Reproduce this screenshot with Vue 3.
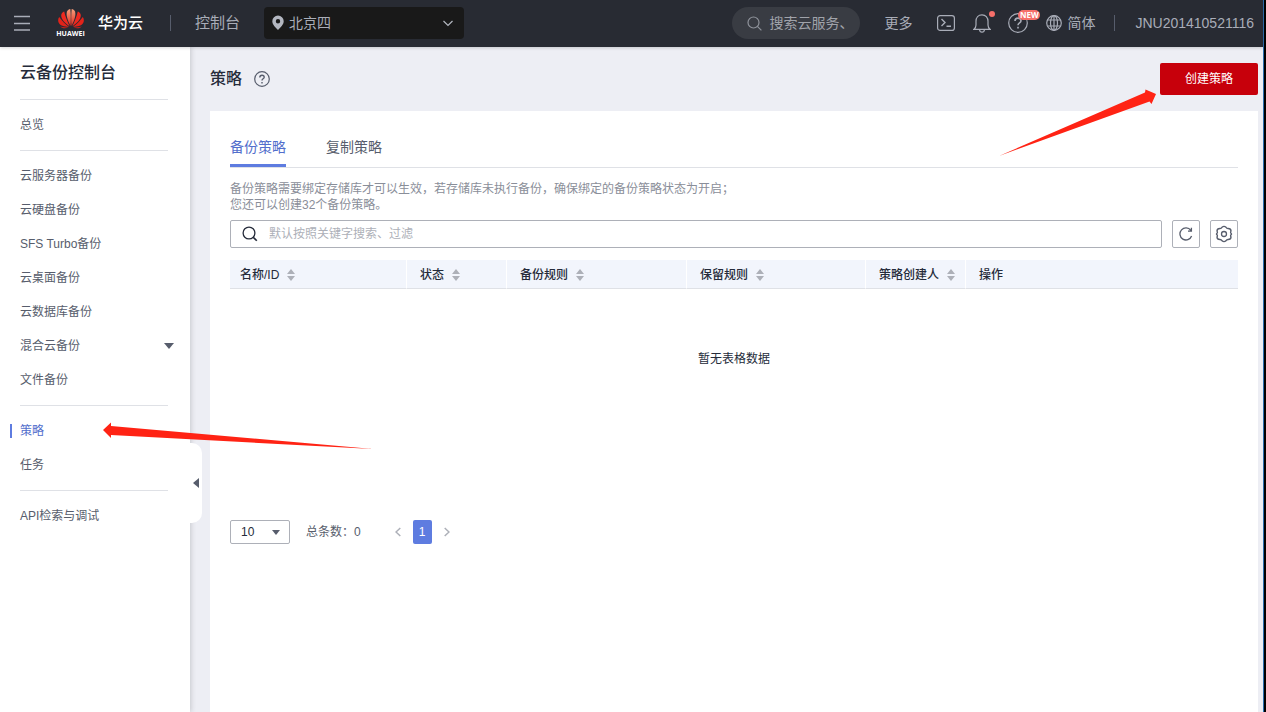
<script setup>
import { ref } from 'vue'

const groups = [
  [{ label: '总览' }],
  [
    { label: '云服务器备份' },
    { label: '云硬盘备份' },
    { label: 'SFS Turbo备份' },
    { label: '云桌面备份' },
    { label: '云数据库备份' },
    { label: '混合云备份', expandable: true },
    { label: '文件备份' }
  ],
  [{ label: '策略', active: true }, { label: '任务' }],
  [{ label: 'API检索与调试' }]
]

const columns = [
  { label: '名称/ID', key: 'name', sortable: true },
  { label: '状态', key: 'status', sortable: true },
  { label: '备份规则', key: 'rule', sortable: true },
  { label: '保留规则', key: 'keep', sortable: true },
  { label: '策略创建人', key: 'owner', sortable: true },
  { label: '操作', key: 'action', sortable: false }
]

const tabs = ['备份策略', '复制策略']
const activeTab = ref(0)
</script>

<template>
  <div class="frame">
    <header class="topbar">
      <button class="icon-btn menu" aria-label="菜单">
        <svg width="16" height="16" viewBox="0 0 16 16"><path d="M0 1.500h16M0 8.500h16M0 15h16" stroke="#a9adb8" stroke-width="1.500" fill="none" /></svg>
      </button>
      <a class="brand" href="#">
        <span class="logo">
          <svg width="26" height="20" viewBox="0 0 26 20" aria-hidden="true">
            <defs>
              <linearGradient id="petal" x1="0" y1="0" x2="0" y2="1">
                <stop offset="0" stop-color="#f8a07c" />
                <stop offset="1" stop-color="#e0281e" />
              </linearGradient>
            </defs>
            <path d="M12.500 17C9.500 11 7.800 6 9 2.500C9.700.8 11 .1 12.300 0C12.900 5 12.900 12 12.500 17z" fill="url(#petal)" />
            <path d="M13.500 17C16.500 11 18.200 6 17 2.500C16.300.8 15 .1 13.700 0C13.100 5 13.100 12 13.500 17z" fill="url(#petal)" />
            <path d="M11.600 17.300C7 14 3.300 10.500 3.200 6.500C3.200 4.500 4.600 3 6.200 2.500C7.300 7.500 9.500 12.500 11.600 17.300z" fill="#ee2a20" />
            <path d="M14.400 17.300C19 14 22.700 10.500 22.800 6.500C22.800 4.500 21.400 3 19.800 2.500C18.700 7.500 16.500 12.500 14.400 17.300z" fill="#ee2a20" />
            <path d="M10.900 17.800C6 17.800 1.800 16.500.6 13.500C-.2 11.400 .1 9.500 1.200 8C4 12 7.400 15.200 10.900 17.800z" fill="#e2231a" />
            <path d="M15.100 17.800C20 17.800 24.200 16.500 25.400 13.500C26.200 11.400 25.900 9.500 24.800 8C22 12 18.600 15.200 15.100 17.800z" fill="#e2231a" />
            <path d="M10.500 18.600C7.500 19.800 4.200 19.700 2.200 17.600C5 18.400 7.600 18.600 10.500 18.600zM15.500 18.600C18.500 19.800 21.800 19.700 23.800 17.600C21 18.400 18.400 18.600 15.500 18.600z" fill="#d91f18" />
          </svg>
          <span class="logo-name">HUAWEI</span>
        </span>
        <span class="brand-name">华为云</span>
      </a>
      <i class="sep"></i>
      <a class="console" href="#">控制台</a>
      <div class="region">
        <svg class="pin" width="12" height="15" viewBox="0 0 12 15"><path fill-rule="evenodd" d="M6 .5a5.700 5.700 0 0 1 5.700 5.700C11.700 9.500 8.500 12.500 6 15C3.500 12.500.3 9.500.3 6.200A5.700 5.700 0 0 1 6 .5zM6 4a2.200 2.200 0 1 0 0 4.400A2.200 2.200 0 0 0 6 4z" fill="#b3b7c0" /></svg>
        <select aria-label="区域">
          <option>北京四</option>
        </select>
        <svg class="chev" width="12" height="7" viewBox="0 0 12 7"><path d="M1.500 1L6 5.500 10.500 1" stroke="#b3b7c0" stroke-width="1.200" fill="none" /></svg>
      </div>

      <div class="right">
        <label class="cloud-search">
          <svg width="15" height="15" viewBox="0 0 15 15"><circle cx="6.500" cy="6.500" r="5.500" stroke="#8f939b" stroke-width="1.200" fill="none" /><path d="M10.400 10.400l4 4" stroke="#8f939b" stroke-width="1.200" /></svg>
          <input type="text" placeholder="搜索云服务、" aria-label="搜索云服务" />
        </label>
        <a class="more" href="#">更多</a>
        <button class="icon-btn term" aria-label="命令行">
          <svg width="18" height="16" viewBox="0 0 18 16"><rect x=".6" y=".6" width="16.800" height="14.800" rx="2.500" stroke="#a9adb8" stroke-width="1.200" fill="none" /><path d="M4.500 4l3.500 3.500L4.500 11M9.500 11.200h4.500" stroke="#a9adb8" stroke-width="1.400" fill="none" /></svg>
        </button>
        <button class="icon-btn bell" aria-label="消息">
          <svg width="18" height="19" viewBox="0 0 18 19"><path d="M1 15.300h16c-1.500-1.300-2-2.500-2-4.300V7.300C15 3.500 12.600.8 9 .8S3 3.500 3 7.300V11c0 1.800-.5 3-2 4.300zM6.500 15.500c.2 1.700 1.200 2.700 2.500 2.700s2.300-1 2.500-2.700" stroke="#a9adb8" stroke-width="1.200" fill="none" /></svg>
          <i class="dot"></i>
        </button>
        <button class="icon-btn help" aria-label="帮助">
          <svg width="20" height="20" viewBox="0 0 20 20"><circle cx="10" cy="10" r="9.300" stroke="#a9adb8" stroke-width="1.200" fill="none" /><path d="M7 8c0-1.800 1.300-2.900 3-2.900s3 1.100 3 2.700c0 2.100-3 2.100-3 4.400M10 13.700v1.700" stroke="#a9adb8" stroke-width="1.600" fill="none" /></svg>
          <span class="new">NEW</span>
        </button>
        <button class="lang">
          <svg width="16" height="16" viewBox="0 0 16 16"><g stroke="#a9adb8" stroke-width="1.200" fill="none"><circle cx="8" cy="8" r="7.300" /><ellipse cx="8" cy="8" rx="3.500" ry="7.300" /><path d="M8 .7v14.600M1.500 5h13M1.500 11h13" /></g></svg>
          简体
        </button>
        <i class="sep"></i>
        <a class="account" href="#">JNU201410521116</a>
      </div>
    </header>

    <div class="body">
      <aside class="side">
        <h2>云备份控制台</h2>
        <nav>
          <ul v-for="(group, i) in groups" :key="i">
            <li v-for="item in group" :key="item.label">
              <a href="#" :class="{ active: item.active }">
                {{ item.label }}
                <svg v-if="item.expandable" width="10" height="6" viewBox="0 0 10 6"><path d="M0 0h10L5 6z" fill="#575d6c" /></svg>
              </a>
            </li>
          </ul>
        </nav>
        <button class="collapse" aria-label="收起">
          <svg width="6" height="10" viewBox="0 0 6 10"><path d="M6 0v10L0 5z" fill="#575d6c" /></svg>
        </button>
      </aside>

      <main>
        <div class="title-row">
          <h1>策略</h1>
          <svg width="16" height="16" viewBox="0 0 16 16"><circle cx="8" cy="8" r="7.300" stroke="#575d6c" stroke-width="1.200" fill="none" /><path d="M5.800 6.400c0-1.400 1-2.200 2.200-2.200s2.200.8 2.200 2c0 1.600-2.200 1.600-2.200 3.300M8 11v1.400" stroke="#575d6c" stroke-width="1.400" fill="none" /></svg>
          <button class="create">创建策略</button>
        </div>

        <section class="card">
          <div class="tabs" role="tablist">
            <button v-for="(tab, i) in tabs" :key="tab" role="tab" :aria-selected="activeTab === i" :class="{ on: activeTab === i }" @click="activeTab = i">{{ tab }}</button>
          </div>
          <p class="desc">备份策略需要绑定存储库才可以生效，若存储库未执行备份，确保绑定的备份策略状态为开启；<br />您还可以创建32个备份策略。</p>
          <div class="tools">
            <label class="filter">
              <svg width="16" height="16" viewBox="0 0 16 16"><circle cx="7" cy="7" r="5.900" stroke="#252b3a" stroke-width="1.300" fill="none" /><path d="M11.200 11.200l3.600 3.600" stroke="#252b3a" stroke-width="1.600" /></svg>
              <input type="text" placeholder="默认按照关键字搜索、过滤" aria-label="搜索" />
            </label>
            <button class="square" aria-label="刷新">
              <svg width="14" height="14" viewBox="0 0 14 14"><path d="M12.600 9A6 6 0 1 1 11.800 3.400M12.400.8v3.400H9" stroke="#575d6c" stroke-width="1.300" fill="none" /></svg>
            </button>
            <button class="square" aria-label="设置">
              <svg width="18" height="18" viewBox="0 0 18 18"><path d="M7 2.200Q9 .6 11 2.200Q11.700 3.600 13.200 3.500Q15.900 3.500 16 6Q15.200 7.500 16 8.200Q17 9 16 9.800Q15.200 10.500 16 12Q15.900 14.500 13.200 14.500Q11.700 14.400 11 15.800Q9 17.400 7 15.800Q6.300 14.400 4.800 14.500Q2.100 14.500 2 12Q2.800 10.500 2 9.800Q1 9 2 8.200Q2.800 7.500 2 6Q2.100 3.500 4.800 3.500Q6.300 3.600 7 2.200z" stroke="#575d6c" stroke-width="1.400" fill="none" /><circle cx="9" cy="9" r="2.500" stroke="#575d6c" stroke-width="1.300" fill="none" /></svg>
            </button>
          </div>

          <table>
            <colgroup>
              <col v-for="c in columns" :key="c.key" :class="'c-' + c.key" />
            </colgroup>
            <thead>
              <tr>
                <th v-for="c in columns" :key="c.key" scope="col">
                  <span>
                    {{ c.label }}
                    <svg v-if="c.sortable" width="8" height="12" viewBox="0 0 8 12"><path d="M4 0l4 5H0zM4 12l4-5H0z" fill="#adb0b8" /></svg>
                  </span>
                </th>
              </tr>
            </thead>
            <tbody>
              <tr><td colspan="6">暂无表格数据</td></tr>
            </tbody>
          </table>

          <div class="pager">
            <div class="size">
              <select aria-label="每页条数"><option>10</option></select>
              <svg width="8" height="5" viewBox="0 0 8 5"><path d="M0 0h8L4 5z" fill="#575d6c" /></svg>
            </div>
            <span class="total">总条数：0</span>
            <button class="step" aria-label="上一页"><svg width="6" height="10" viewBox="0 0 6 10"><path d="M5.300 1L1 5l4.300 4" stroke="#adb0b8" stroke-width="1.500" fill="none" /></svg></button>
            <button class="page">1</button>
            <button class="step" aria-label="下一页"><svg width="6" height="10" viewBox="0 0 6 10"><path d="M.7 1L5 5 .7 9" stroke="#adb0b8" stroke-width="1.500" fill="none" /></svg></button>
          </div>
        </section>
      </main>
    </div>

    <svg class="mark to-create" width="158" height="68" viewBox="0 0 158 68" aria-hidden="true"><path d="M0 67L146 3.500L146.500.5L157 5L152.500 15L150.500 12.500z" fill="#ff2314" /></svg>
    <svg class="mark to-policy" width="270" height="28" viewBox="0 0 270 28" aria-hidden="true"><path d="M0 8l8-7.500V4L270 27 8 13v3z" fill="#ff2314" /></svg>
  </div>
</template>

<style>
html,
body {
  background: #000;
}
</style>

<style scoped>
.frame {
  position: relative;
  display: flex;
  flex-direction: column;
  min-height: 100vh;
  margin-right: 2px;
  border-right: 1px solid #2a6fae;
  box-sizing: border-box;
  background: #edeef4;
  color: #575d6c;
  font: 12px/16px "Liberation Sans", "Noto Sans CJK SC", sans-serif;
}
.frame *,
.frame *::before {
  box-sizing: border-box;
}
button,
input,
select {
  font: inherit;
  color: inherit;
  margin: 0;
  padding: 0;
  border: 0;
  background: none;
  outline: 0;
  appearance: none;
}
button {
  cursor: pointer;
}
a {
  color: inherit;
  text-decoration: none;
}
svg {
  display: block;
  flex: none;
}
h1,
h2,
p,
ul {
  margin: 0;
  padding: 0;
  list-style: none;
}

/* top bar */
.topbar {
  position: relative;
  z-index: 2;
  display: flex;
  align-items: center;
  height: 47px;
  padding: 0 9px 1px 14px;
  background: #282b33;
  box-shadow: 0 1px 3px rgba(40, 43, 51, 0.2);
  color: #a9adb8;
  font-size: 14px;
  line-height: 20px;
}
.icon-btn {
  position: relative;
}
.brand {
  display: flex;
  align-items: center;
  margin-left: 27px;
}
.logo {
  display: flex;
  flex-direction: column;
  align-items: center;
  gap: 1px;
  width: 27px;
  color: #fff;
}
.logo-name {
  font: bold 7px/7px "Open Sans", sans-serif;
}
.brand-name {
  margin-left: 14px;
  color: #fff;
  font-size: 15px;
  font-weight: 500;
}
.sep {
  width: 1px;
  height: 16px;
  background: #575d6c;
}
.brand + .sep {
  margin: 0 24px 0 27px;
}
.console {
  font-size: 15px;
}
.region {
  position: relative;
  width: 200px;
  height: 32px;
  margin-left: 24px;
}
.region select {
  width: 100%;
  height: 100%;
  padding: 0 32px 0 25px;
  border-radius: 4px;
  background: #191919;
}
.pin,
.chev {
  position: absolute;
  pointer-events: none;
}
.pin {
  left: 8px;
  top: 8px;
}
.chev {
  right: 10px;
  top: 13px;
}
.right {
  display: flex;
  align-items: center;
  margin-left: auto;
}
.cloud-search {
  display: flex;
  align-items: center;
  gap: 7px;
  width: 128px;
  height: 32px;
  padding: 0 15px;
  border-radius: 16px;
  background: #393c43;
}
.cloud-search input {
  width: 84px;
  flex: none;
}
.cloud-search input::placeholder {
  color: #a0a3aa;
  opacity: 1;
}
.more {
  margin-left: 24px;
}
.term {
  margin-left: 25px;
}
.bell {
  margin-left: 18px;
}
.help {
  margin-left: 17px;
}
.dot {
  position: absolute;
  right: -4px;
  top: -3px;
  width: 6px;
  height: 6px;
  border-radius: 50%;
  background: #f66f6a;
}
.new {
  position: absolute;
  left: 10px;
  top: -3px;
  width: 22px;
  height: 10px;
  border-radius: 5px;
  background: #f66f6a;
  color: #fff;
  font: bold 8px/10px "Open Sans", sans-serif;
  text-align: center;
}
.lang {
  display: flex;
  align-items: center;
  gap: 5px;
  margin-left: 18px;
}
.right .sep {
  margin: 0 20px 0 19px;
}

/* side navigation */
.body {
  display: flex;
  flex: 1;
}
.side {
  position: relative;
  flex: none;
  width: 190px;
  background: #fff;
  box-shadow: 1px 0 5px rgba(40, 43, 51, 0.2);
}
.side h2 {
  margin: 0 22px 0 20px;
  height: 53px;
  border-bottom: 1px solid #dfe1e6;
  color: #252b3a;
  font-size: 16px;
  font-weight: 500;
  line-height: 52px;
}
.side ul {
  padding: 8px 0;
}
.side ul + ul::before {
  content: "";
  display: block;
  height: 1px;
  margin: -1px 22px 8px 20px;
  background: #dfe1e6;
}
.side ul:not(:last-child) {
  padding-bottom: 9px;
}
.side ul + ul {
  padding-top: 0;
}
.side li a {
  position: relative;
  display: flex;
  align-items: center;
  justify-content: space-between;
  height: 34px;
  padding: 0 16px 0 20px;
}
.side li a.active {
  color: #526ecc;
}
.side li a.active::before {
  content: "";
  position: absolute;
  left: 10px;
  top: 10px;
  width: 2px;
  height: 14px;
  background: #5e7ce0;
}
.collapse {
  position: absolute;
  left: 190px;
  top: 396px;
  display: flex;
  align-items: center;
  width: 12px;
  height: 80px;
  padding-left: 3px;
  border-radius: 0 10px 10px 0;
  background: #fff;
}

/* content */
main {
  flex: 1;
  display: flex;
  flex-direction: column;
  min-width: 0;
  padding: 0 5px 0 20px;
}
.title-row {
  display: flex;
  align-items: center;
  gap: 12px;
  height: 64px;
}
.title-row h1 {
  color: #252b3a;
  font-size: 16px;
  line-height: 24px;
  font-weight: 500;
}
.create {
  width: 98px;
  height: 32px;
  margin-left: auto;
  border-radius: 2px;
  background: #c7000b;
  color: #fff;
}
.card {
  flex: 1;
  padding: 16px 20px;
  background: #fff;
}
.tabs {
  display: flex;
  gap: 40px;
  height: 41px;
  border-bottom: 1px solid #dfe1e6;
  font-size: 14px;
}
.tabs button {
  height: 40px;
  padding-top: 2px;
  border-bottom: 3px solid transparent;
}
.tabs .on {
  border-color: #5e7ce0;
  color: #526ecc;
}
.desc {
  padding: 13px 0 7px;
  color: #8a8e99;
}
.tools {
  display: flex;
  gap: 10px;
}
.filter {
  display: flex;
  align-items: center;
  flex: 1;
  gap: 11px;
  height: 28px;
  padding: 0 11px;
  border: 1px solid #adb0b8;
  border-radius: 2px;
}
.filter input {
  flex: 1;
}
.filter input::placeholder {
  color: #adb0b8;
  opacity: 1;
}
.square {
  display: flex;
  align-items: center;
  justify-content: center;
  width: 28px;
  height: 28px;
  border: 1px solid #adb0b8;
  border-radius: 2px;
}
table {
  width: 100%;
  margin-top: 12px;
  table-layout: fixed;
  border-collapse: separate;
  border-spacing: 0;
}
.c-name {
  width: 176px;
}
.c-status,
.c-owner {
  width: 100px;
}
.c-rule {
  width: 180px;
}
.c-keep {
  width: 179px;
}
th {
  height: 29px;
  padding: 1px 0 0 13px;
  border-bottom: 1px solid #dfe1e6;
  border-left: 1px solid #fff;
  background: #f2f5fc;
  color: #252b3a;
  font-weight: 500;
  text-align: left;
}
th:first-child {
  padding-left: 10px;
  border-left: 0;
}
th span {
  display: flex;
  align-items: center;
  gap: 8px;
}
td {
  height: 139px;
  padding: 0;
  color: #252b3a;
  text-align: center;
}
.pager {
  display: flex;
  align-items: center;
  margin-top: 92px;
}
.size {
  position: relative;
  width: 60px;
  height: 24px;
  color: #252b3a;
}
.size select {
  width: 100%;
  height: 100%;
  padding-left: 10px;
  border: 1px solid #adb0b8;
  border-radius: 2px;
}
.size svg {
  position: absolute;
  right: 10px;
  top: 10px;
  pointer-events: none;
}
.total {
  margin: 0 32px 0 16px;
}
.step {
  padding: 0 2px;
}
.page {
  width: 19px;
  height: 24px;
  margin: 0 10px;
  border-radius: 2px;
  background: #5e7ce0;
  color: #fff;
}

/* pointer arrows laid over the page */
.mark {
  position: absolute;
  z-index: 3;
  pointer-events: none;
}
.to-create {
  right: 106px;
  top: 89px;
}
.to-policy {
  left: 103px;
  top: 422px;
}
</style>
